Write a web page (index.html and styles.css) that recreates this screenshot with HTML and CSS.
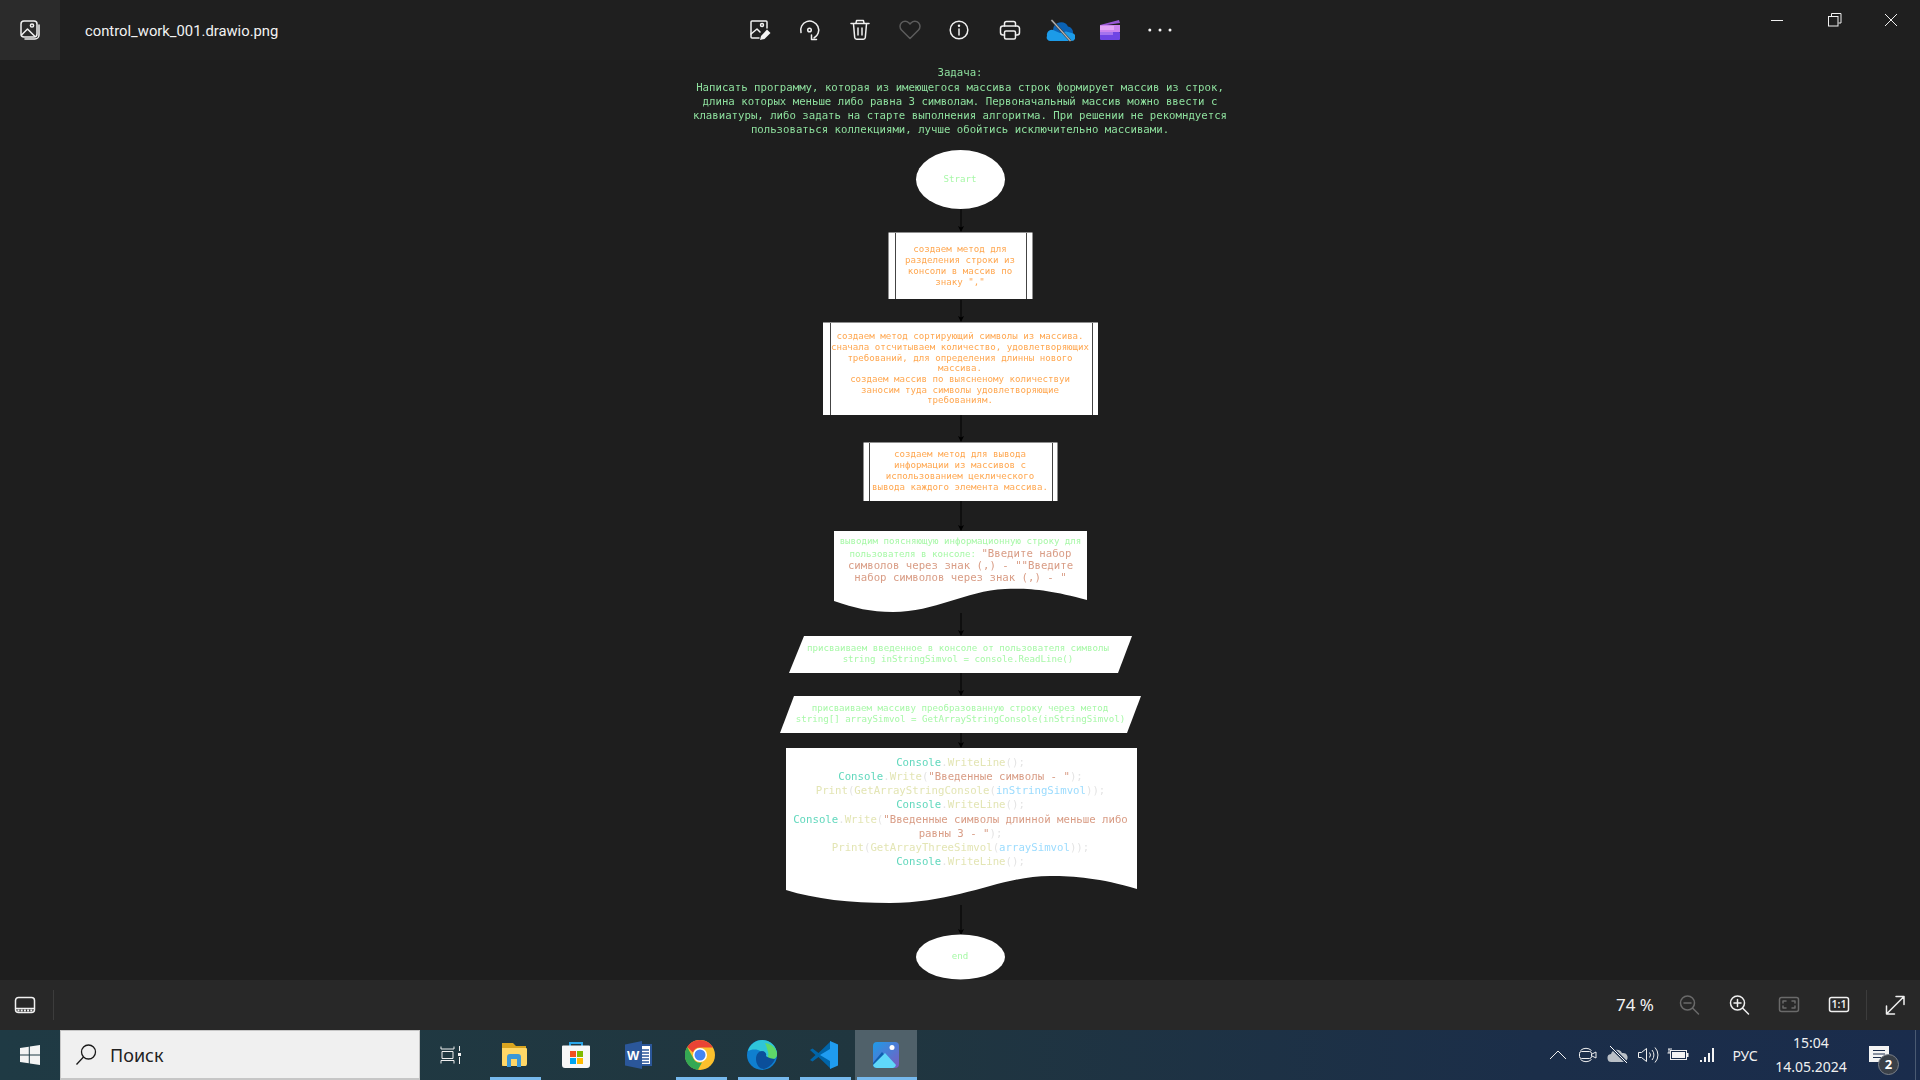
FILE: index.html
```html
<!DOCTYPE html>
<html lang="ru">
<head>
<meta charset="utf-8">
<title>control_work_001.drawio.png</title>
<link rel="stylesheet" href="styles.css">
</head>
<body>
<div class="app">
  <header class="topbar">
    <div class="tab">
      <svg class="ico" viewBox="0 0 24 24"><g class="st w15"><rect x="3" y="3" width="16" height="16" rx="3"/><path d="M3.5 17l6-6 7 7"/><circle cx="14" cy="7.5" r="1.6"/><path d="M21 7v10a4 4 0 0 1-4 4H7"/></g></svg>
    </div>
    <div class="title">control_work_001.drawio.png</div>
    <nav class="tools">
      <button class="tool"><svg class="ico nudge" viewBox="0 0 24 24"><g class="st w15"><path d="M12 20H5a1 1 0 0 1-1-1V4a1 1 0 0 1 1-1h14a1 1 0 0 1 1 1v6"/><path d="M4 16l6-5 3 3"/><circle cx="15" cy="7" r="1.5"/></g><path class="fw" d="M13 22l1-4 6-6.500 3.500 3.500-6 6z"/></svg></button>
      <button class="tool"><svg class="ico" viewBox="0 0 24 24"><g class="st w15"><path d="M3 14.500A9 9 0 1 1 16 20"/><path d="M18.500 21.500h-5v-4.500"/><circle cx="11.500" cy="12" r="1.800"/></g></svg></button>
      <button class="tool"><svg class="ico" viewBox="0 0 24 24"><g class="st w15"><path d="M3 5.500h18"/><path d="M8 5l.6-2.500h6.800L16 5"/><path d="M5.500 6l1.200 13.500a2 2 0 0 0 2 1.800h6.600a2 2 0 0 0 2-1.800L18.500 6"/><path d="M10 10v7M14 10v7"/></g></svg></button>
      <button class="tool"><svg class="ico" viewBox="0 0 24 24"><path class="st-dim w15" d="M12 20.500L3.500 12a5.200 5.200 0 0 1 0-7.300 5.200 5.200 0 0 1 7.300 0L12 6l1.200-1.300a5.200 5.200 0 0 1 7.300 0 5.200 5.200 0 0 1 0 7.300z"/></svg></button>
      <button class="tool"><svg class="ico nudge" viewBox="0 0 24 24"><g class="st w15"><circle cx="12" cy="12" r="8.800"/><path d="M12 11v6"/></g><circle class="fw" cx="12" cy="7.800" r="1.200"/></svg></button>
      <button class="tool"><svg class="ico" viewBox="0 0 24 24"><g class="st w15"><path d="M6.500 8V5.500a2 2 0 0 1 2-2h7a2 2 0 0 1 2 2V8"/><path d="M6.500 17H5a2.500 2.500 0 0 1-2.500-2.500v-4A2.500 2.500 0 0 1 5 8h14a2.500 2.500 0 0 1 2.500 2.500v4A2.500 2.500 0 0 1 19 17h-1.500"/><rect x="6.500" y="13" width="11" height="8" rx="1.500"/></g></svg></button>
      <button class="tool"><svg class="ico ico-lg" viewBox="0 0 30 24"><path fill="#0a62b5" d="M8 12a8 8 0 0 1 15-3.500 6 6 0 0 1 5 7l-8 2-12-3z"/><path fill="#1c9be8" d="M5 23a3.500 3.500 0 0 1-3-5 5 5 0 0 1 6-6l7 3 6-1.500 6 1.500a4 4 0 0 1-1.500 8z"/><path d="M6.500 2l19 21" stroke="#3a3a3a" stroke-width="2.600" fill="none"/><path d="M6.500 2l19 21" stroke="#b4b4b4" stroke-width="1.200" fill="none"/></svg></button>
      <button class="tool"><svg class="ico" viewBox="0 0 24 24"><path fill="#9a58d6" d="M2 7l19-5 1 3L2 8z"/><rect x="2" y="7" width="20" height="7" fill="#cb84ee"/><rect x="2" y="8" width="14" height="4" fill="#e3a4f5"/><rect x="2" y="14" width="20" height="8" rx="1" fill="#6f45e4"/><rect x="2" y="14" width="13" height="3" fill="#a473ee"/></svg></button>
      <button class="tool"><svg class="ico" viewBox="0 0 24 24"><circle class="fw" cx="1.800" cy="12" r="1.500"/><circle class="fw" cx="12" cy="12" r="1.500"/><circle class="fw" cx="22" cy="12" r="1.500"/></svg></button>
    </nav>
    <div class="winctl">
      <div class="winbtn"><svg class="ico" viewBox="0 0 24 24"><path class="st w1" d="M6 12.500h12"/></svg></div>
      <div class="winbtn"><svg class="ico" viewBox="0 0 24 24"><path class="st w1" d="M9.500 8V5.500h9.500V15h-2.500"/><rect class="st w1" x="6.500" y="8.500" width="9.500" height="9.500"/></svg></div>
      <div class="winbtn"><svg class="ico" viewBox="0 0 24 24"><path class="st w1" d="M6 6l12 12M18 6L6 18"/></svg></div>
    </div>
  </header>

  <main class="viewer">
    <svg class="chart" width="600" height="920" viewBox="660 60 600 920">
      <defs>
        <marker id="ah" markerWidth="7" markerHeight="7" refX="5" refY="3" orient="auto"><path d="M0 0L6 3L0 6L1.500 3z" fill="#000"/></marker>
      </defs>
      <g class="arrows">
        <path marker-end="url(#ah)" d="M961 209V231"/>
        <path marker-end="url(#ah)" d="M961 300V321"/>
        <path marker-end="url(#ah)" d="M961 415V441"/>
        <path marker-end="url(#ah)" d="M961 501V530"/>
        <path marker-end="url(#ah)" d="M961 613V635"/>
        <path marker-end="url(#ah)" d="M961 673V695"/>
        <path marker-end="url(#ah)" d="M961 733V747"/>
        <path marker-end="url(#ah)" d="M961 905V934"/>
      </g>
      <g class="shapes">
        <ellipse cx="960.500" cy="179.500" rx="44.500" ry="29.500"/>
        <rect x="888.500" y="232.500" width="144" height="66.500"/>
        <rect x="823" y="322.500" width="275" height="92.500"/>
        <rect x="863.500" y="442.500" width="194" height="58.500"/>
        <path d="M834 531H1087V600C1050 590 1030 588 1005 589C965 591 935 612 893 612C870 612 855 608 834 601Z"/>
        <path d="M804 636H1132L1118 673H789Z"/>
        <path d="M794 696H1141L1127 733H780Z"/>
        <path d="M786 748H1137V889C1100 878 1075 876 1050 876C1000 876 960 903 890 903C850 903 815 899 786 890Z"/>
        <ellipse cx="960.500" cy="957" rx="44.500" ry="22.500"/>
      </g>
      <g class="edges">
        <path d="M895.500 233V299M1026.500 233V299"/>
        <path d="M830.500 323V415M1092.500 323V415"/>
        <path d="M869.500 443V501M1052.500 443V501"/>
      </g>
      <g class="labels">
        <text class="t11 task" x="960" y="76">Задача:</text>
        <text class="t11 task" x="960" y="90.700">Написать программу, которая из имеющегося массива строк формирует массив из строк,</text>
        <text class="t11 task" x="960" y="104.900">длина которых меньше либо равна 3 символам. Первоначальный массив можно ввести с</text>
        <text class="t11 task" x="960" y="119">клавиатуры, либо задать на старте выполнения алгоритма. При решении не рекомндуется</text>
        <text class="t11 task" x="960" y="133">пользоваться коллекциями, лучше обойтись исключительно массивами.</text>

        <text class="t9 green" x="960" y="182">Strart</text>

        <text class="t9 orange" x="960" y="252">создаем метод для</text>
        <text class="t9 orange" x="960" y="263">разделения строки из</text>
        <text class="t9 orange" x="960" y="274">консоли в массив по</text>
        <text class="t9 orange" x="960" y="284.500">знаку ","</text>

        <text class="t9 orange" x="960" y="338.500">создаем метод сортирующий символы из массива.</text>
        <text class="t9 orange" x="960" y="349.500">сначала отсчитываем количество, удовлетворяющих</text>
        <text class="t9 orange" x="960" y="360.500">требований, для определения длинны нового</text>
        <text class="t9 orange" x="960" y="371">массива.</text>
        <text class="t9 orange" x="960" y="382">создаем массив по выясненому количествуи</text>
        <text class="t9 orange" x="960" y="393">заносим туда символы удовлетворяющие</text>
        <text class="t9 orange" x="960" y="403">требованиям.</text>

        <text class="t9 orange" x="960" y="457">создаем метод для вывода</text>
        <text class="t9 orange" x="960" y="468">информации из массивов с</text>
        <text class="t9 orange" x="960" y="479">использованием цеклического</text>
        <text class="t9 orange" x="960" y="490">вывода каждого элемента массива.</text>

        <text class="t9 green" x="960.500" y="544">выводим поясняющую информационную строку для</text>
        <text x="960.500" y="556.500"><tspan class="t9 green">пользователя в консоле: </tspan><tspan class="t11 str">"Введите набор</tspan></text>
        <text class="t11 str" x="960.500" y="568.500">символов через знак (,) - ""Введите</text>
        <text class="t11 str" x="960.500" y="581">набор символов через знак (,) - "</text>

        <text class="t9 green" x="958" y="651">присваиваем введенное в консоле от пользователя символы</text>
        <text class="t9 green" x="958" y="662">string inStringSimvol = console.ReadLine()</text>
        <text class="t9 green" x="960" y="711">присваиваем массиву преобразованную строку через метод</text>
        <text class="t9 green" x="960.500" y="722">string[] arraySimvol = GetArrayStringConsole(inStringSimvol)</text>

        <text class="t11 code" x="960.500" y="765.500"><tspan class="cls">Console</tspan>.<tspan class="fn">WriteLine</tspan>();</text>
        <text class="t11 code" x="960.500" y="779.500"><tspan class="cls">Console</tspan>.<tspan class="fn">Write</tspan>(<tspan class="str">"Введенные символы - "</tspan>);</text>
        <text class="t11 code" x="960.500" y="793.500"><tspan class="fn">Print</tspan>(<tspan class="fn">GetArrayStringConsole</tspan>(<tspan class="var">inStringSimvol</tspan>));</text>
        <text class="t11 code" x="960.500" y="808"><tspan class="cls">Console</tspan>.<tspan class="fn">WriteLine</tspan>();</text>
        <text class="t11 code" x="960.500" y="822.500"><tspan class="cls">Console</tspan>.<tspan class="fn">Write</tspan>(<tspan class="str">"Введенные символы длинной меньше либо</tspan></text>
        <text class="t11 code" x="960.500" y="836.500"><tspan class="str">равны 3 - "</tspan>);</text>
        <text class="t11 code" x="960.500" y="850.500"><tspan class="fn">Print</tspan>(<tspan class="fn">GetArrayThreeSimvol</tspan>(<tspan class="var">arraySimvol</tspan>));</text>
        <text class="t11 code" x="960.500" y="864.500"><tspan class="cls">Console</tspan>.<tspan class="fn">WriteLine</tspan>();</text>

        <text class="t9 green" x="960" y="959">end</text>
      </g>
    </svg>
  </main>

  <section class="statusbar">
    <div class="bar-btn first"><svg class="ico" viewBox="0 0 24 24"><rect class="st w15" x="2.500" y="4.500" width="19" height="15" rx="3"/><path class="st w15" d="M3 15.500h18"/><path class="st w2 dash" d="M4.500 17.500h15"/></svg></div>
    <div class="divider"></div>
    <div class="zoom-val">74 %</div>
    <div class="bar-btn"><svg class="ico" viewBox="0 0 24 24"><g class="st-mid w15"><circle cx="10.500" cy="10" r="7"/><path d="M7 10h7M15.500 15l6 6"/></g></svg></div>
    <div class="bar-btn"><svg class="ico" viewBox="0 0 24 24"><g class="st w15"><circle cx="10.500" cy="10" r="7"/><path d="M7 10h7M10.500 6.500v7M15.500 15l6 6"/></g></svg></div>
    <div class="bar-btn"><svg class="ico" viewBox="0 0 24 24"><g class="st-mid w15"><rect x="2.500" y="4.500" width="19" height="14" rx="2"/><path d="M6 10V8h3M15 8h3v2M18 13v2h-3M9 15H6v-2"/></g></svg></div>
    <div class="bar-btn"><svg class="ico" viewBox="0 0 24 24"><rect class="st w15" x="2.500" y="4.500" width="19" height="14" rx="2"/><text class="oneone" x="12" y="15">1:1</text></svg></div>
    <div class="divider end"></div>
    <div class="bar-btn expand"><svg class="ico" viewBox="0 0 24 24"><g class="st w15"><path d="M3.500 21L21 3.500M13 3.500h8v8M3.500 13v8h8"/></g></svg></div>
  </section>

  <footer class="taskbar">
    <div class="start"><svg width="20" height="20" viewBox="0 0 20 20"><path class="fw" d="M0 3l8.800-1.300v7.800H0zM9.800 1.500L20 0v9.500H9.800zM0 10.500h8.800v7.800L0 17zM9.800 10.500H20V20L9.800 18.500z"/></svg></div>
    <div class="search">
      <svg width="24" height="24" viewBox="0 0 24 24"><g fill="none" stroke="#1a1a1a" stroke-width="1.300"><circle cx="14.500" cy="9" r="7"/><path d="M9.500 14L2.500 21.500"/></g></svg>
      <span class="search-text">Поиск</span>
    </div>
    <div class="apps">
      <div class="app-btn tv"><svg width="24" height="24" viewBox="0 0 24 24"><g class="st w1"><path d="M3 3.500v2.500h13V3.500M4 8.500h11v7H4zM3 20.500v-3h13v3M21.500 3v5M21.500 14v7"/></g><rect class="fw" x="20" y="10" width="3" height="3"/></svg></div>
      <div class="app-btn on"><svg width="30" height="30" viewBox="0 0 30 30"><path fill="#d9a520" d="M3 3h11l3 3h10v20H3z"/><path fill="#ffd767" d="M3 8h24a1 1 0 0 1 1 1v15a2 2 0 0 1-2 2H5a2 2 0 0 1-2-2z"/><path fill="#3c98d8" d="M8 27V17a3 3 0 0 1 3-3h8a3 3 0 0 1 3 3v10h-4v-8h-6v8z"/></svg></div>
      <div class="app-btn"><svg width="30" height="30" viewBox="0 0 30 30"><path d="M9 7V3h12v4" fill="none" stroke="#29a5e8" stroke-width="2"/><path fill="#f7f7f7" d="M2 5.500h26a1 1 0 0 1 1 1V25a3 3 0 0 1-3 3H4a3 3 0 0 1-3-3V6.500a1 1 0 0 1 1-1z"/><rect x="9" y="11" width="6" height="6" fill="#f25022"/><rect x="16" y="11" width="6" height="6" fill="#7fba00"/><rect x="9" y="18" width="6" height="6" fill="#00a4ef"/><rect x="16" y="18" width="6" height="6" fill="#ffb900"/></svg></div>
      <div class="app-btn"><svg width="30" height="30" viewBox="0 0 30 30"><path fill="#fff" stroke="#2b579a" stroke-width="2" d="M14 5h14v20H14z"/><path stroke="#2b579a" stroke-width="1.500" d="M18 10h8M18 13h8M18 16h8M18 19h8M18 22h8"/><path fill="#2b579a" d="M2 4.500L19 1v28L2 25.500z"/><text class="word" x="10.200" y="20">W</text></svg></div>
      <div class="app-btn on"><svg width="30" height="30" viewBox="0 0 30 30"><circle cx="15" cy="15" r="15" fill="#fbc02d"/><path fill="#ea4335" d="M15 0a15 15 0 0 1 13 7.500H15a7.500 7.500 0 0 0-7 5L2.200 7A15 15 0 0 1 15 0z"/><path fill="#34a853" d="M2.200 7L8.500 18.500a7.500 7.500 0 0 0 8.500 4L12.800 30A15 15 0 0 1 2.200 7z"/><circle cx="15" cy="15" r="7" fill="#fff"/><circle cx="15" cy="15" r="5.500" fill="#4285f4"/></svg></div>
      <div class="app-btn on"><svg width="30" height="30" viewBox="0 0 30 30"><circle cx="15" cy="15" r="15" fill="#0f7fcf"/><path fill="#2fc5d8" d="M1 11C3 4 9 0 15 0c8 0 15 6 15 14 0 3-2 5-5 5H14c-1 0-1-1 0-2 2-2 1-6-3-7-4-1-8 0-10 1z"/><path fill="#5fd868" d="M18 3c7 1 12 6 12 11 0 3-2 5-5 5h-7c3-1 4-4 3-7-1-4-2-7-3-9z"/><path fill="#0b4f9a" d="M9 19c0-5 3-8 6-8 3 0 5 3 4 5 2 2 7 3 9 3 0 0-3 8-11 10-5 0-8-5-8-10z"/></svg></div>
      <div class="app-btn on"><svg width="30" height="30" viewBox="0 0 30 30"><path fill="#0065a9" d="M22 1L9.500 13 3.500 8.500 1 10l5.500 5L1 20l2.500 1.500 6-4.500L22 29z"/><path fill="#1f9cf0" d="M21 1l7 3a1 1 0 0 1 1 1v20a1 1 0 0 1-1 1l-7 3V21L11 15 21 9z"/></svg></div>
      <div class="app-btn on active"><svg width="28" height="28" viewBox="0 0 28 28"><defs><linearGradient id="ph" x1="0" y1="0" x2="1" y2="1"><stop offset="0" stop-color="#1e9be8"/><stop offset="1" stop-color="#7a5cc0"/></linearGradient></defs><rect x="1" y="1" width="26" height="26" rx="4" fill="url(#ph)"/><circle cx="20" cy="6.500" r="2.500" fill="#fff"/><path fill="#0f5fb0" d="M1 22L10 11l8 9-8 7H5a4 4 0 0 1-4-4z"/><path fill="#5fd8fa" d="M1 24l12-12 11 12a4 4 0 0 1-3 3H5a4 4 0 0 1-4-3z"/></svg></div>
    </div>
    <div class="tray">
      <div class="tray-ico"><svg width="20" height="20" viewBox="0 0 20 20"><path class="st w1" d="M2 14l8-8 8 8"/></svg></div>
      <div class="tray-ico"><svg width="20" height="20" viewBox="0 0 20 20"><g class="st w1"><path d="M2.500 5.500a8 8 0 0 1 11 0M2.500 14.500a8 8 0 0 0 11 0"/><rect x="1.500" y="6.500" width="12" height="7" rx="2"/><path d="M14 9l4-2v6l-4-2"/></g></svg></div>
      <div class="tray-ico"><svg width="22" height="20" viewBox="0 0 22 20"><path fill="#b9bfc6" d="M5 17a4 4 0 0 1-1-8 6 6 0 0 1 11-1 4.500 4.500 0 0 1 2 9z"/><path d="M3 1l17 17" stroke="#1c2f4b" stroke-width="3"/><path d="M3 1l17 17" stroke="#fff" stroke-width="1"/></svg></div>
      <div class="tray-ico"><svg width="22" height="20" viewBox="0 0 22 20"><g class="st w1"><path d="M1.500 7.500h3l5-4v13l-5-4h-3z"/><path d="M12.500 7.500a4 4 0 0 1 0 5M15 5a7.500 7.500 0 0 1 0 10M18 2.500a11 11 0 0 1 0 15"/></g></svg></div>
      <div class="tray-ico"><svg width="22" height="20" viewBox="0 0 22 20"><path class="st w1" d="M0.500 8h3M2 4v4"/><path class="st w1" d="M4 3v2M2 3v2"/><rect class="st w1" x="3.500" y="5.500" width="16" height="9"/><rect class="fw" x="5" y="7" width="13" height="6"/><rect class="fw" x="20" y="8" width="1.500" height="4"/></svg></div>
      <div class="tray-ico"><svg width="20" height="20" viewBox="0 0 20 20"><g class="fw"><rect x="2" y="15" width="2" height="2"/><rect x="6" y="12" width="2" height="5"/><rect x="10" y="8" width="2" height="9"/><rect x="14" y="3" width="2" height="14"/></g></svg></div>
      <div class="lang">РУС</div>
      <div class="clock"><span>15:04</span><span>14.05.2024</span></div>
      <div class="notif">
        <svg width="21" height="19" viewBox="0 0 21 19"><path class="fw" d="M0 0h20v16H0z"/><path d="M4 4.500h12M4 8h12M4 11.500h8" stroke="#1c2d4b" stroke-width="1"/></svg>
        <span class="badge">2</span>
      </div>
      <div class="desk"></div>
    </div>
  </footer>
</div>
</body>
</html>
```
FILE: styles.css
```css
* { box-sizing: border-box; }
html, body { margin: 0; height: 100%; background: #1e1e1e; overflow: hidden; }
body { font-family: "Noto Sans", "Open Sans", sans-serif; color: #fff; }
.app { width: 1920px; height: 1080px; display: grid; grid-template-rows: 60px 920px 50px 50px; }

svg { display: block; }
.ico { width: 24px; height: 24px; }
.ico-lg { width: 30px; height: 24px; }
.nudge { margin-right: 2px; }
.st { fill: none; stroke: #f0f0f0; }
.st-dim { fill: none; stroke: #5c5c5c; }
.st-mid { fill: none; stroke: #6a6a6a; }
.w1 { stroke-width: 1; }
.w15 { stroke-width: 1.5; stroke-linecap: round; stroke-linejoin: round; }
.w2 { stroke-width: 2; }
.dash { stroke-dasharray: 2 1.2; stroke-linecap: butt; }
.fw { fill: #f4f4f4; }

/* top bar */
.topbar { display: flex; align-items: center; background: #1f1f1f; }
.tab { width: 60px; height: 60px; background: #2b2b2b; display: flex; align-items: center; justify-content: center; }
.title { margin-left: 25px; padding-top: 2px; width: 649.5px; font-family: Roboto, "Noto Sans", sans-serif; font-size: 14.8px; color: #f2f2f2; }
.tools { display: flex; }
.tool { width: 50px; height: 60px; padding: 0; border: 0; background: none; display: flex; align-items: center; justify-content: center; }
.winctl { margin-left: auto; margin-right: 1px; display: flex; }
.winbtn { width: 57px; height: 40px; margin-top: -20px; display: flex; align-items: center; justify-content: center; }

/* viewer */
.viewer { background: #1e1e1e; display: flex; justify-content: center; overflow: hidden; }
.arrows path { fill: none; stroke: #000; stroke-width: 1; }
.shapes > * { fill: #fff; }
.edges path { fill: none; stroke: #444; stroke-width: 1; }
.labels { font-family: "DejaVu Sans Mono", "Liberation Mono", monospace; text-anchor: middle; filter: blur(0.2px); }
.t9 { font-size: 9.15px; }
.t11 { font-size: 10.7px; }
.task { fill: #8ee09e; }
.green { fill: #a8f8a8; }
.orange { fill: #ffa852; }
.code { fill: #e4e4e4; }
.cls { fill: #62d8bd; }
.fn { fill: #e3e5b4; }
.str { fill: #d99d86; }
.var { fill: #9cdcfe; }

/* status bar */
.statusbar { display: flex; align-items: center; background: #282828; }
.bar-btn { width: 50px; height: 50px; display: flex; align-items: center; justify-content: center; }
.bar-btn.first { width: 50px; }
.bar-btn.expand { margin-left: 3px; }
.divider { width: 1px; height: 30px; margin-left: 3px; background: #3c3c3c; }
.divider.end { margin-left: 2px; }
.zoom-val { margin-left: auto; width: 46px; margin-right: 2px; margin-bottom: 2px; font-size: 17px; color: #f2f2f2; white-space: nowrap; }
.oneone { font-family: "Noto Sans", sans-serif; font-size: 10.500px; font-weight: 600; fill: #f0f0f0; text-anchor: middle; }

/* taskbar */
.taskbar { display: flex; background: linear-gradient(90deg, #1f3a44 0%, #20363f 45%, #1b2e49 80%, #1a2c4c 100%); }
.start { width: 60px; display: flex; align-items: center; justify-content: center; }
.search { width: 360px; display: flex; align-items: center; gap: 12px; padding-left: 13px; background: #f0f0f0; border: 1px solid #c6c6c6; border-right-width: 1px; border-bottom-width: 2px; }
.search-text { font-size: 18px; color: #222; }
.apps { display: flex; }
.app-btn { width: 62px; height: 50px; display: flex; align-items: center; justify-content: center; position: relative; }
.app-btn.tv { width: 63px; padding-right: 4px; }
.app-btn.on::after { content: ""; position: absolute; left: 7px; right: 4px; bottom: 0; height: 3px; background: #76b9ed; }
.app-btn.active { background: #50616a; }
.app-btn.active::after { left: 2px; right: 0; }
.word { font-family: "Liberation Sans", sans-serif; font-size: 13px; font-weight: 700; fill: #fff; text-anchor: middle; }
.tray { margin-left: auto; display: flex; align-items: center; height: 50px; }
.tray-ico { width: 30px; display: flex; justify-content: center; }
.lang { width: 44px; text-align: center; font-size: 14px; color: #f0f0f0; }
.clock { width: 88px; display: flex; flex-direction: column; align-items: center; gap: 4px; font-size: 14px; line-height: 20px; color: #f0f0f0; }
.notif { width: 60px; height: 50px; position: relative; display: flex; align-items: center; padding-left: 14px; }
.badge { position: absolute; left: 23px; top: 24px; width: 21px; height: 21px; border-radius: 50%; background: #3a4048; border: 1px solid #7b8088; font-size: 13px; font-weight: 700; line-height: 18px; text-align: center; color: #fff; }
.desk { width: 5px; height: 50px; border-left: 1px solid #4a5a72; }
```
